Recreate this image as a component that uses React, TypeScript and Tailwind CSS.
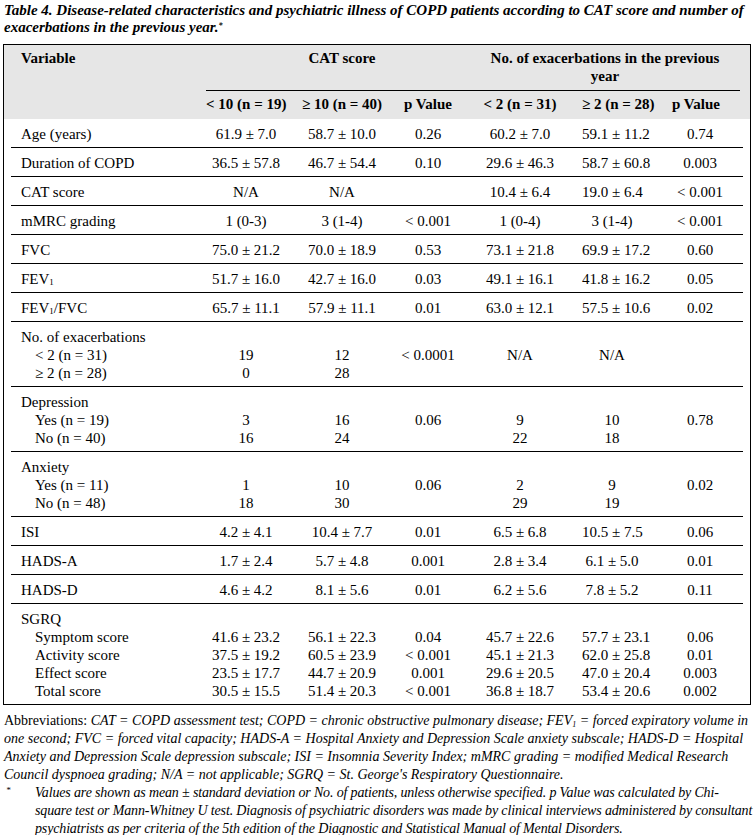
import React from "react";

type Row = {
  label: React.ReactNode;
  vals?: string[];
  sub?: boolean;
};

type Group = Row[];

const cols = "grid grid-cols-[195px_80px_112px_60px_124px_60px_98px] whitespace-nowrap";

const Fev = () => (
  <>
    FEV<sub className="text-[9px] relative top-[1px]">1</sub>
  </>
);

const groups: Group[] = [
  [{ label: "Age (years)", vals: ["61.9 ± 7.0", "58.7 ± 10.0", "0.26", "60.2 ± 7.0", "59.1 ± 11.2", "0.74"] }],
  [{ label: "Duration of COPD", vals: ["36.5 ± 57.8", "46.7 ± 54.4", "0.10", "29.6 ± 46.3", "58.7 ± 60.8", "0.003"] }],
  [{ label: "CAT score", vals: ["N/A", "N/A", "", "10.4 ± 6.4", "19.0 ± 6.4", "< 0.001"] }],
  [{ label: "mMRC grading", vals: ["1 (0-3)", "3 (1-4)", "< 0.001", "1 (0-4)", "3 (1-4)", "< 0.001"] }],
  [{ label: "FVC", vals: ["75.0 ± 21.2", "70.0 ± 18.9", "0.53", "73.1 ± 21.8", "69.9 ± 17.2", "0.60"] }],
  [{ label: <Fev />, vals: ["51.7 ± 16.0", "42.7 ± 16.0", "0.03", "49.1 ± 16.1", "41.8 ± 16.2", "0.05"] }],
  [{ label: <><Fev />/FVC</>, vals: ["65.7 ± 11.1", "57.9 ± 11.1", "0.01", "63.0 ± 12.1", "57.5 ± 10.6", "0.02"] }],
  [
    { label: "No. of exacerbations" },
    { label: "< 2 (n = 31)", sub: true, vals: ["19", "12", "< 0.0001", "N/A", "N/A", ""] },
    { label: "≥ 2 (n = 28)", sub: true, vals: ["0", "28", "", "", "", ""] },
  ],
  [
    { label: "Depression" },
    { label: "Yes (n = 19)", sub: true, vals: ["3", "16", "0.06", "9", "10", "0.78"] },
    { label: "No (n = 40)", sub: true, vals: ["16", "24", "", "22", "18", ""] },
  ],
  [
    { label: "Anxiety" },
    { label: "Yes (n = 11)", sub: true, vals: ["1", "10", "0.06", "2", "9", "0.02"] },
    { label: "No (n = 48)", sub: true, vals: ["18", "30", "", "29", "19", ""] },
  ],
  [{ label: "ISI", vals: ["4.2 ± 4.1", "10.4 ± 7.7", "0.01", "6.5 ± 6.8", "10.5 ± 7.5", "0.06"] }],
  [{ label: "HADS-A", vals: ["1.7 ± 2.4", "5.7 ± 4.8", "0.001", "2.8 ± 3.4", "6.1 ± 5.0", "0.01"] }],
  [{ label: "HADS-D", vals: ["4.6 ± 4.2", "8.1 ± 5.6", "0.01", "6.2 ± 5.6", "7.8 ± 5.2", "0.11"] }],
  [
    { label: "SGRQ" },
    { label: "Symptom score", sub: true, vals: ["41.6 ± 23.2", "56.1 ± 22.3", "0.04", "45.7 ± 22.6", "57.7 ± 23.1", "0.06"] },
    { label: "Activity score", sub: true, vals: ["37.5 ± 19.2", "60.5 ± 23.9", "< 0.001", "45.1 ± 21.3", "62.0 ± 25.8", "0.01"] },
    { label: "Effect score", sub: true, vals: ["23.5 ± 17.7", "44.7 ± 20.9", "0.001", "29.6 ± 20.5", "47.0 ± 20.4", "0.003"] },
    { label: "Total score", sub: true, vals: ["30.5 ± 15.5", "51.4 ± 20.3", "< 0.001", "36.8 ± 18.7", "53.4 ± 20.6", "0.002"] },
  ],
];

const DataLine = ({ row }: { row: Row }) => (
  <div className={cols}>
    <div className={row.sub ? "pl-[24px]" : "pl-[10px]"}>{row.label}</div>
    {(row.vals ?? ["", "", "", "", "", ""]).map((v, i) => (
      <div key={i} className={i === 5 ? "text-center pl-[18px]" : "text-center"}>
        {v}
      </div>
    ))}
  </div>
);

export default function App() {
  return (
    <div className="w-[754px] h-[835px] bg-white text-black font-['Liberation_Serif',serif] overflow-hidden">
      {/* titre */}
      <div className="px-[4px] pt-[2px] text-[15px] leading-[17px] font-bold italic whitespace-nowrap">
        Table 4. Disease-related characteristics and psychiatric illness of COPD patients according to CAT score and number of
        <br />
        exacerbations in the previous year.<sup className="text-[8px]">*</sup>
      </div>

      <div className="mt-[8px] mx-[3px] border border-black text-[15px] leading-[18px]">
        {/* entête grise */}
        <div className="bg-[#e6e6e6] px-[7px] font-bold">
          <div className={cols}>
            <div className="row-span-2 pl-[10px] pt-[4px]">Variable</div>
            <div className="col-span-6 grid grid-cols-subgrid border-b border-black pt-[4px] pb-[5px]">
              <div className="col-span-3 text-center pl-[20px]">CAT score</div>
              <div className="col-span-3 text-center pl-[12px]">
                No. of exacerbations in the previous
                <br />
                year
              </div>
            </div>
            <div className="text-center pt-[4px] pb-[6px]">&lt; 10 (n = 19)</div>
            <div className="text-center pt-[4px] pb-[6px]">≥ 10 (n = 40)</div>
            <div className="text-center pt-[4px] pb-[6px]">p Value</div>
            <div className="text-center pt-[4px] pb-[6px]">&lt; 2 (n = 31)</div>
            <div className="text-center pt-[4px] pb-[6px]">≥ 2 (n = 28)</div>
            <div className="text-center pl-[10px] pt-[4px] pb-[6px]">p Value</div>
          </div>
        </div>

        {/* corps */}
        <div className="px-[7px] divide-y divide-black">
          {groups.map((g, gi) => (
            <div key={gi} className="pt-[6px] pb-[4px]">
              {g.map((r, ri) => (
                <DataLine key={ri} row={r} />
              ))}
            </div>
          ))}
        </div>
      </div>

      {/* notes */}
      <div className="mt-[7px] px-[4px] text-[14px] leading-[18px]">
        <p>
          Abbreviations: <i>CAT = COPD assessment test; COPD = chronic obstructive pulmonary disease; FEV<sub className="text-[8px] leading-none">1</sub> = forced expiratory volume in one second; FVC = forced vital capacity; HADS-A = Hospital Anxiety and Depression Scale anxiety subscale; HADS-D = Hospital Anxiety and Depression Scale depression subscale; ISI = Insomnia Severity Index; mMRC grading = modified Medical Research Council dyspnoea grading; N/A = not applicable; SGRQ = St. George's Respiratory Questionnaire.</i>
        </p>
        <div className="flex italic">
          <span className="w-[31px] shrink-0 pl-[2px] text-[9px] leading-[12px]">*</span>
          <p className="whitespace-nowrap tracking-[-0.15px]">
            Values are shown as mean ± standard deviation or No. of patients, unless otherwise specified. p Value was calculated by Chi-
            <br />
            square test or Mann-Whitney U test. Diagnosis of psychiatric disorders was made by clinical interviews administered by consultant
            <br />
            psychiatrists as per criteria of the 5th edition of the Diagnostic and Statistical Manual of Mental Disorders.
          </p>
        </div>
      </div>
    </div>
  );
}
